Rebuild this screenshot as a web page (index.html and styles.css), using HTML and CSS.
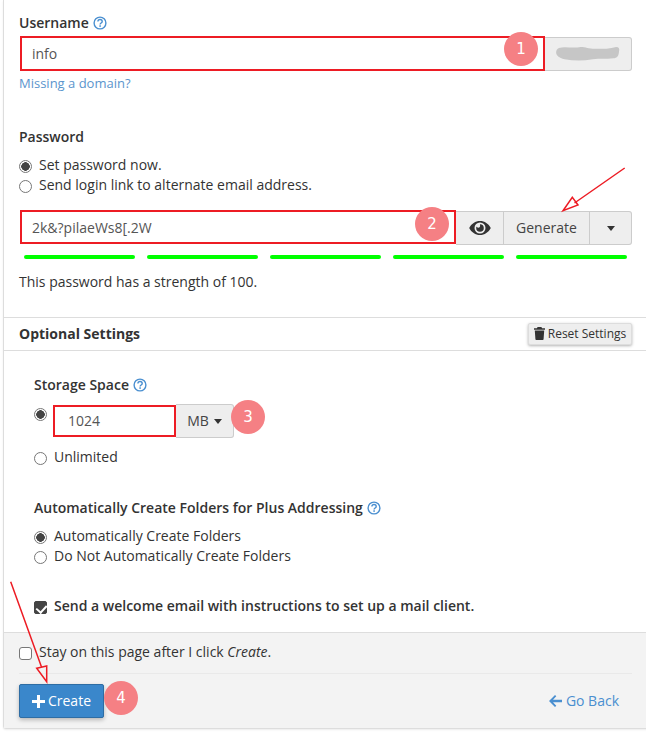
FILE: index.html
```html
<!DOCTYPE html>
<html lang="en">
<head>
<meta charset="utf-8">
<title>Create Email Account</title>
<link rel="stylesheet" href="styles.css">
</head>
<body>
<svg class="defs" width="0" height="0" aria-hidden="true">
  <symbol id="help" viewBox="0 0 14 14">
    <circle cx="7" cy="7" r="5.900" fill="none" stroke="currentColor" stroke-width="1.400"/>
    <path d="M4.900 5.500C5 4.200 5.900 3.500 7 3.500c1.300 0 2.200.8 2.200 1.900 0 1.700-2.100 1.600-2.100 3.200" fill="none" stroke="currentColor" stroke-width="1.400"/>
    <rect x="6.300" y="9.300" width="1.600" height="1.500" fill="currentColor"/>
  </symbol>
</svg>
<main class="panel">
  <div class="body-top">
    <div class="field-label">Username <svg class="help"><use href="#help"/></svg></div>
    <div class="group username-group">
      <input class="red-input grow" type="text" value="info" aria-label="Username">
      <div class="addon domain"><svg class="blur" width="68" height="15" viewBox="0 0 68 16"><path d="M3 2C10 0 18 3 26 1c6 0 8 2 16 2 8 0 16 0 22-2 3 0 4 2 3 5 0 4-2 7-6 7-8 1-14 0-22 1-10 2-20 2-30 0C3 13 0 10 0 7 0 4 1 3 3 2Z" fill="#c6c6c6"/></svg></div>
      <span class="badge badge-1">1</span>
    </div>
    <a class="domain-link" href="#">Missing a domain?</a>

    <div class="field-label password-label">Password</div>
    <label class="choice first-choice"><input class="radio" type="radio" name="pw" checked> Set password now.</label>
    <label class="choice"><input class="radio" type="radio" name="pw"> Send login link to alternate email address.</label>

    <div class="group password-group">
      <input class="red-input grow" type="text" value="2k&amp;?pilaeWs8[.2W" aria-label="Password">
      <div class="addon eye-btn">
        <svg width="22" height="14" viewBox="0 0 22 14"><path fill-rule="evenodd" d="M11 0c4.600 0 8.600 2.700 10.800 7C19.600 11.300 15.600 14 11 14S2.400 11.300.2 7C2.400 2.700 6.400 0 11 0Zm0 1.500a5.500 5.500 0 1 0 0 11 5.500 5.500 0 0 0 0-11ZM11 3.200a3.800 3.800 0 1 1-3.800 3.800c0-.5.100-1 .3-1.400.3.700 1 1.100 1.700 1.100a1.900 1.900 0 0 0 1.800-2.600c0-.4 0-.9 0-.9Z" fill="#333"/></svg>
      </div>
      <div class="addon generate-btn">Generate</div>
      <div class="addon caret-btn"><span class="caret"></span></div>
      <span class="badge badge-2">2</span>
    </div>
    <div class="bars"><span></span><span></span><span></span><span></span><span></span></div>
    <p class="strength">This password has a strength of 100.</p>
  </div>

  <div class="section-head">
    <strong>Optional Settings</strong>
    <button class="reset" type="button">
      <svg width="11" height="13" viewBox="0 0 11 13"><path d="M3.600 0h3.800l.7 1.300H11v1.400H0V1.300h2.900L3.600 0ZM.8 3.500h9.400l-.6 8.500c0 .6-.5 1-1 1H2.400c-.5 0-1-.4-1-1L.8 3.500Z" fill="#333"/></svg>
      Reset Settings
    </button>
  </div>

  <div class="options">
    <div class="sub-label">Storage Space <svg class="help"><use href="#help"/></svg></div>
    <div class="storage-row">
      <input class="radio storage-radio" type="radio" name="quota" checked aria-label="Limited">
      <div class="group storage-group">
        <input class="red-input storage-input" type="text" value="1024" aria-label="Storage">
        <div class="addon mb-btn">MB <span class="caret"></span></div>
        <span class="badge badge-3">3</span>
      </div>
    </div>
    <label class="choice unlimited"><input class="radio" type="radio" name="quota"> Unlimited</label>

    <div class="sub-label plus-label">Automatically Create Folders for Plus Addressing <svg class="help"><use href="#help"/></svg></div>
    <label class="choice first-choice"><input class="radio" type="radio" name="plus" checked> Automatically Create Folders</label>
    <label class="choice"><input class="radio" type="radio" name="plus"> Do Not Automatically Create Folders</label>

    <label class="welcome"><input class="check dark" type="checkbox" checked> Send a welcome email with instructions to set up a mail client.</label>
  </div>

  <footer class="foot">
    <label class="stay"><input class="check" type="checkbox"> <span>Stay on this page after I click <em>Create</em>.</span></label>
    <div class="actions">
      <div class="create-wrap">
        <button class="create" type="button">
          <svg width="13" height="13" viewBox="0 0 13 13"><path d="M5 0h3v5h5v3H8v5H5V8H0V5h5V0Z" fill="#fff"/></svg>
          Create
        </button>
        <span class="badge badge-4">4</span>
      </div>
      <a class="back" href="#">
        <svg width="13" height="12" viewBox="0 0 13 12"><path d="M6 0l1.300 1.300L4 4.700h9v2.600H4l3.300 3.400L6 12 0 6l6-6Z" fill="#4a8fd0"/></svg>
        Go Back
      </a>
    </div>
  </footer>
</main>
<svg class="arrows" width="646" height="734" viewBox="0 0 646 734" aria-hidden="true">
  <path d="M624.700 168L574.500 203M563 210.700l9.300-13.400 5.700 7.700Z" fill="none" stroke="#ed1c24" stroke-width="1.500"/>
  <path d="M10.700 581.700L41.500 667M46.700 681.700l-10-13.400 10-2.300Z" fill="none" stroke="#ed1c24" stroke-width="1.500"/>
</svg>
</body>
</html>
```
FILE: styles.css
```css
* { box-sizing: border-box; }
html, body { margin: 0; padding: 0; height: 734px; overflow: hidden; background: #fff; }
body {
  position: relative;
  font-family: "Open Sans", "Noto Sans", sans-serif;
  font-size: 14px;
  line-height: 20px;
  color: #333;
}
.defs { position: absolute; }
.arrows { position: absolute; left: 0; top: 0; pointer-events: none; }

.panel {
  margin-left: 3px;
  width: 660px;
  height: 729px;
  border-left: 1px solid #ddd;
  border-bottom: 1px solid #ddd;
  border-bottom-left-radius: 3px;
  box-shadow: 0 1px 2px rgba(0,0,0,.08);
}
.body-top { padding: 13px 0 0 15px; height: 317px; }
.field-label { font-weight: 600; height: 20px; display: flex; align-items: center; gap: 4px; }
.help { width: 14px; height: 14px; color: #4a8fd0; }

.group { position: relative; display: flex; align-items: flex-start; width: 612px; margin-left: 1px; }
.username-group { margin-top: 3px; height: 36px; }
.password-group { margin-top: 15px; height: 36px; }
.grow { flex: 1; min-width: 0; }
.red-input {
  height: 34px;
  border: 2px solid #ed1c24;
  background: #fff;
  padding: 0 10px;
  font: inherit;
  color: #555;
  border-radius: 0;
  outline: 0;
}
.username-group .red-input { height: 35px; }
.addon {
  height: 34px;
  margin-top: 1px;
  background: #eee;
  border: 1px solid #ccc;
  display: flex;
  align-items: center;
  justify-content: center;
  color: #444;
  flex: none;
}
.blur { margin-bottom: 2px; }
.domain { width: 87px; border-left: 0; border-radius: 0 3px 3px 0; }
.eye-btn { width: 48px; border-left: 0; }
.generate-btn { width: 86px; border-left: 0; }
.caret-btn { width: 42px; border-left: 0; border-radius: 0 3px 3px 0; }
.caret {
  display: inline-block;
  width: 0;
  height: 0;
  border-left: 4.500px solid transparent;
  border-right: 4.500px solid transparent;
  border-top: 5px solid #333;
}
.domain-link { display: block; margin-top: 1px; font-size: 13px; line-height: 20px; color: #5b95cd; text-decoration: none; }
.password-label { margin-top: 34px; }
.choice { display: flex; align-items: center; gap: 7px; height: 20px; line-height: 20px; }
.first-choice { margin-top: 8px; }
.radio, .check {
  appearance: none;
  -webkit-appearance: none;
  margin: 0;
  flex: none;
  width: 13px;
  height: 13px;
  background: #fff;
  border: 1px solid #777;
}
.choice .radio { margin-top: 2px; }
.radio { border-radius: 50%; }
.radio:checked { background: radial-gradient(circle, #444 0 4px, #fff 4.500px); }
.check { border-radius: 3px; }
.stay .check { margin-top: 2px; }
.check.dark { background: #444; border-color: #444; position: relative; margin-top: 3px; border-radius: 2px; }
.check.dark::after {
  content: "";
  position: absolute;
  left: 3px;
  top: 1px;
  width: 5px;
  height: 8px;
  border: solid #fff;
  border-width: 0 2px 2px 0;
  transform: rotate(42deg);
}

.bars { display: grid; grid-template-columns: repeat(5, 111px); gap: 12px; width: 612px; margin: 9px 0 0 1px; padding: 0 4px; }
.bars span { height: 4px; border-radius: 2px; background: #0f0; }
.strength { margin: 13px 0 0; }

.section-head {
  height: 34px;
  border-top: 1px solid #ddd;
  border-bottom: 1px solid #ddd;
  display: flex;
  align-items: center;
  justify-content: space-between;
  padding: 0 0 0 15px;
}
.section-head strong { font-weight: 700; font-size: 14px; }
.reset {
  width: 104px;
  height: 22px;
  margin-right: 31px;
  margin-top: -1px;
  padding: 0;
  border: 1px solid #ddd;
  border-radius: 2px;
  background: #eee;
  box-shadow: 0 1px 3px rgba(0,0,0,.3);
  font: 12px/20px "Open Sans", sans-serif;
  color: #333;
  display: flex;
  align-items: center;
  justify-content: center;
  gap: 3px;
}

.options { padding: 24px 0 0 30px; height: 281px; }
.sub-label { font-weight: 600; display: flex; align-items: center; gap: 4px; height: 20px; }
.storage-row { display: flex; align-items: flex-start; margin-top: 9px; }
.storage-radio { margin-top: 4px; }
.storage-group { margin-left: 6px; width: 181px; height: 34px; }
.storage-input { width: 123px; height: 32px; flex: none; margin-top: 1px; padding: 0 0 1px 13px; }
.mb-btn { width: 58px; border-left: 0; margin-top: 0; height: 34px; border-radius: 0 3px 3px 0; gap: 5px; }
.unlimited { margin-top: 9px; }
.plus-label { margin-top: 31px; }
.welcome { display: flex; align-items: center; gap: 7px; height: 20px; margin-top: 30px; font-weight: 600; }

.foot { background: #f3f3f3; border-top: 1px solid #ddd; height: 96px; padding: 8px 0 0 15px; }
.stay { display: flex; align-items: center; gap: 7px; height: 22px; }
.actions {
  width: 613px;
  margin-top: 10px;
  border-top: 1px solid #e9e9e9;
  padding-top: 10px;
  display: flex;
  align-items: center;
  justify-content: space-between;
}
.create-wrap { position: relative; }
.create {
  width: 85px;
  height: 34px;
  border: 1px solid #2e6da4;
  border-radius: 2px;
  background: #3a87cb;
  color: #fff;
  font: 14px/20px "Open Sans", sans-serif;
  box-shadow: 0 2px 4px rgba(0,0,0,.25);
  padding: 0;
  display: flex;
  align-items: center;
  justify-content: center;
  gap: 3px;
}
.back { display: flex; align-items: center; gap: 4px; margin-right: 13px; color: #4a8fd0; text-decoration: none; }

.badge {
  position: absolute;
  width: 34px;
  height: 34px;
  border-radius: 50%;
  background: #f58084;
  color: #fff;
  font: 15px/34px "DejaVu Sans", sans-serif;
  text-align: center;
}
.badge-1 { left: 484px; top: -4px; }
.badge-2 { left: 395px; top: -3px; }
.badge-3 { left: 178px; top: -4px; }
.badge-4 { left: 85px; top: -3px; }
```
